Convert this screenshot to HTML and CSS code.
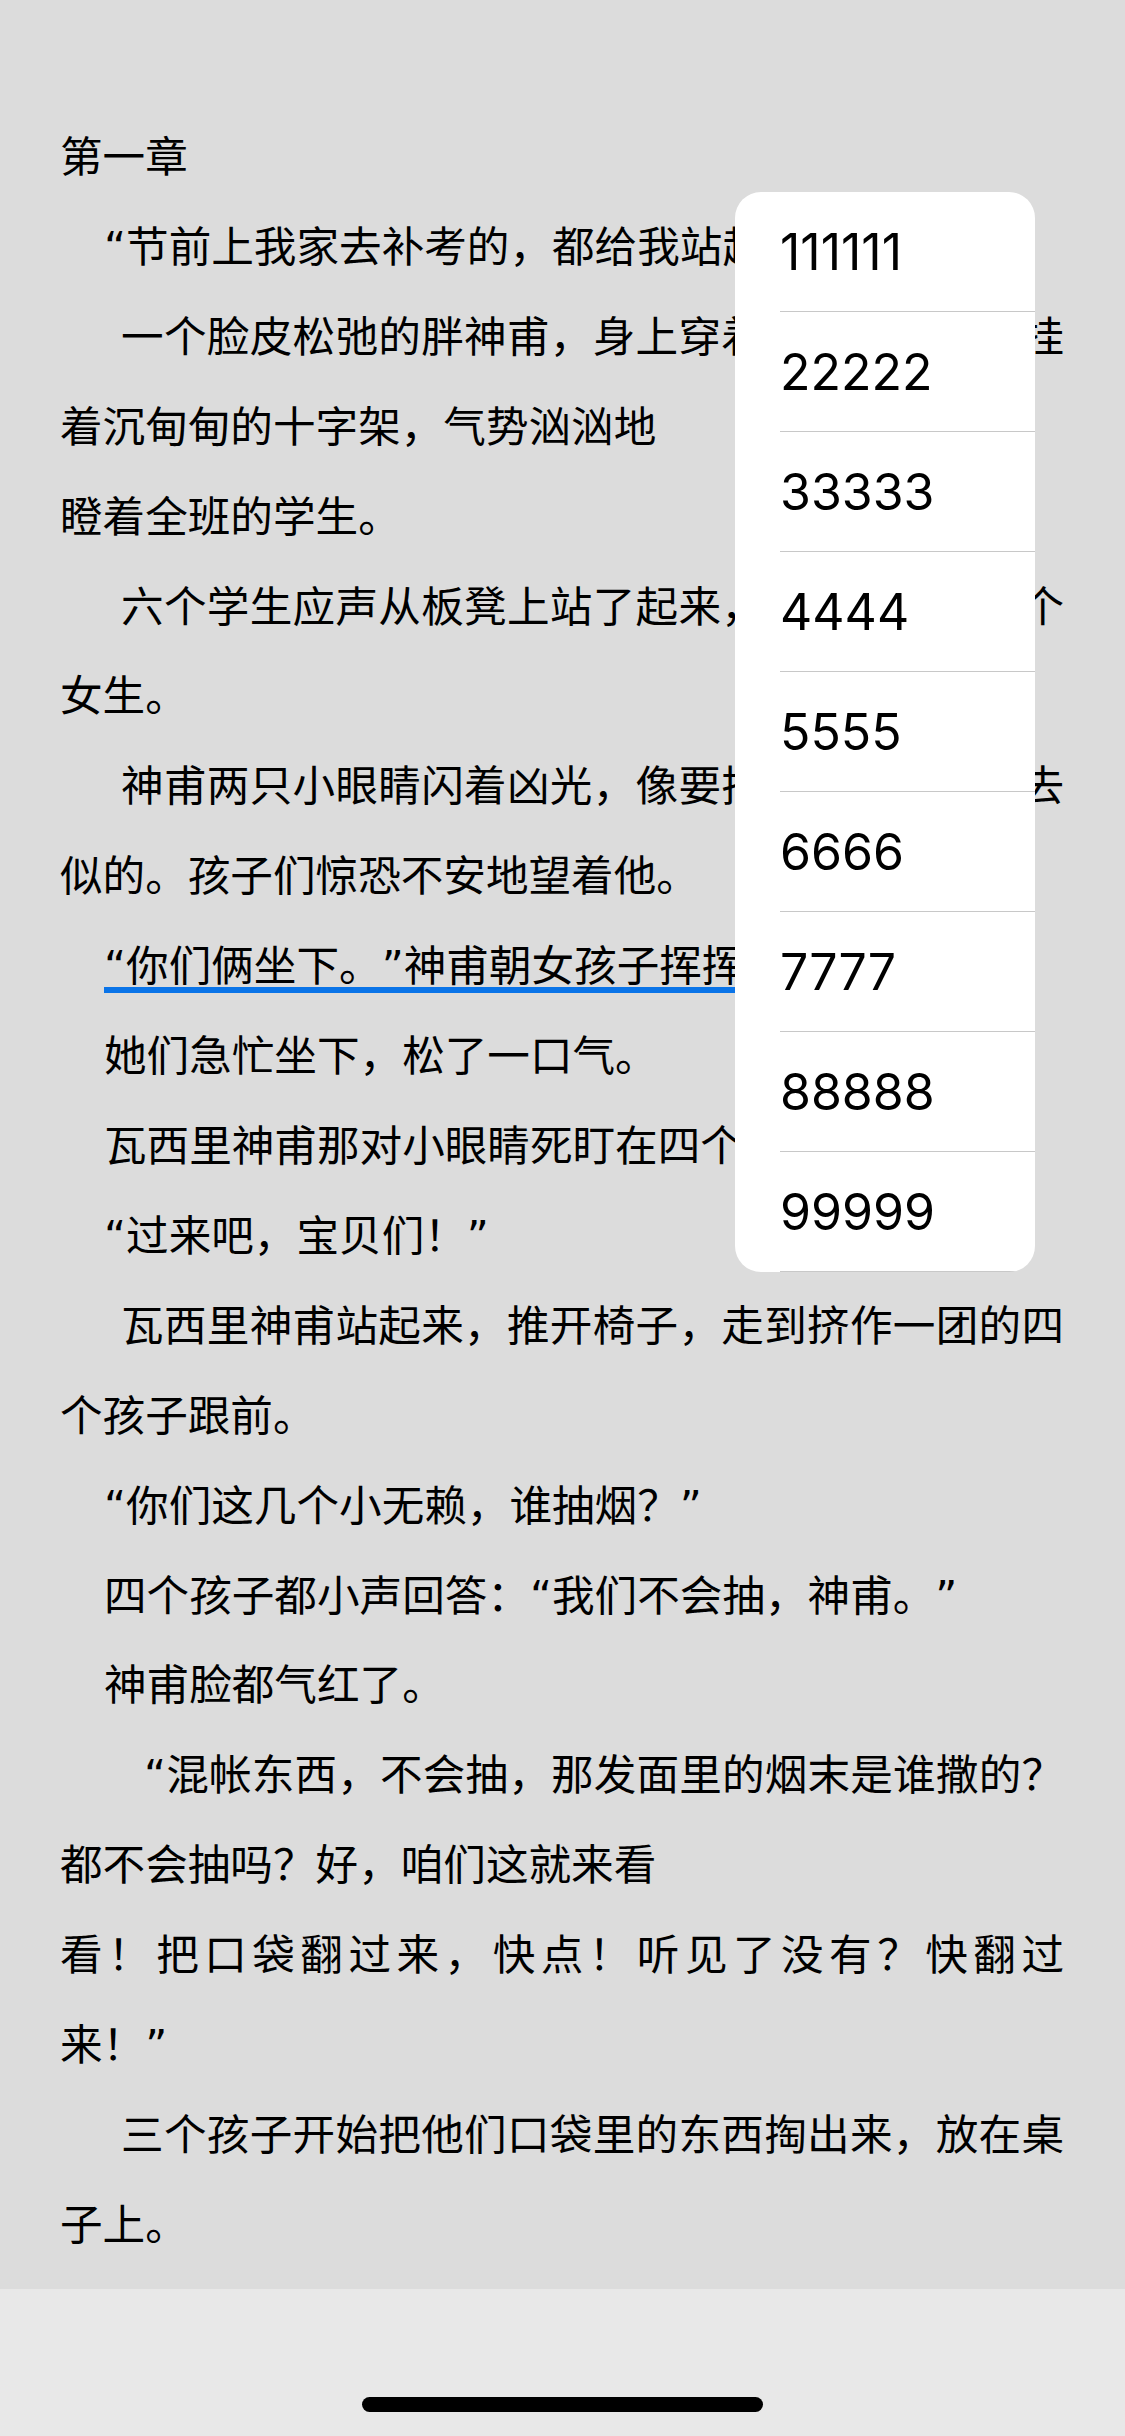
FILE: index.html
```html
<!DOCTYPE html>
<html lang="zh-CN">
<head>
<meta charset="utf-8">
<title>第一章</title>
<link rel="stylesheet" href="styles.css">
</head>
<body>
<div class="screen">
  <main class="reader">
    <h1 class="chapter">第一章</h1>
    <p class="i1">“节前上我家去补考的，都给我站起来！”</p>
    <p class="i15">一个脸皮松弛的胖神甫，身上穿着法衣，脖子上挂着沉甸甸的十字架，气势汹汹地<br>瞪着全班的学生。</p>
    <p class="i15">六个学生应声从板凳上站了起来，四个男生，两个女生。</p>
    <p class="i15">神甫两只小眼睛闪着凶光，像要把他们一口吞下去似的。孩子们惊恐不安地望着他。</p>
    <p class="i1"><span class="marked">“你们俩坐下。”神甫朝女孩子挥挥手说。</span></p>
    <p class="i1">她们急忙坐下，松了一口气。</p>
    <p class="i1">瓦西里神甫那对小眼睛死盯在四个男孩子身上。</p>
    <p class="i1">“过来吧，宝贝们！”</p>
    <p class="i15">瓦西里神甫站起来，推开椅子，走到挤作一团的四个孩子跟前。</p>
    <p class="i1">“你们这几个小无赖，谁抽烟？”</p>
    <p class="i1">四个孩子都小声回答：“我们不会抽，神甫。”</p>
    <p class="i1">神甫脸都气红了。</p>
    <p class="i2">“混帐东西，不会抽，那发面里的烟末是谁撒的？都不会抽吗？好，咱们这就来看<span class="full-line">看！把口袋翻过来，快点！听见了没有？快翻过</span>来！”</p>
    <p class="i15">三个孩子开始把他们口袋里的东西掏出来，放在桌子上。</p>
  </main>
  <div class="home-area">
    <div class="home-indicator"></div>
  </div>
  <ul class="menu">
    <li class="menu-item">111111</li>
    <li class="menu-item">22222</li>
    <li class="menu-item">33333</li>
    <li class="menu-item">4444</li>
    <li class="menu-item">5555</li>
    <li class="menu-item">6666</li>
    <li class="menu-item">7777</li>
    <li class="menu-item">88888</li>
    <li class="menu-item">99999</li>
  </ul>
</div>
</body>
</html>
```
FILE: styles.css
```css
html, body {
  margin: 0;
  padding: 0;
}

body {
  width: 1125px;
  height: 2436px;
  overflow: hidden;
  background: #e8e8e8;
  font-family: "DejaVu Sans", "Noto Sans CJK SC", sans-serif;
  color: #000;
}

.screen {
  position: relative;
  height: 2436px;
  display: flex;
  flex-direction: column;
}

.reader {
  height: 2289px;
  box-sizing: border-box;
  padding: 113px 61px 0 60px;
  background: #dcdcdc;
  font-size: 42.6px;
  line-height: 89.9px;
  text-align: justify;
  text-spacing-trim: space-all;
  overflow: hidden;
}

.chapter {
  margin: 0;
  font-size: inherit;
  font-weight: normal;
  line-height: inherit;
}

.reader p {
  margin: 0;
}

.i1 { text-indent: 44px; }
.i15 { text-indent: 61px; }
.i2 { text-indent: 84px; }

.marked {
  text-decoration: underline;
  text-decoration-color: #0a74e8;
  text-decoration-thickness: 6px;
  text-underline-offset: 6px;
  text-decoration-skip-ink: none;
}

.full-line {
  display: block;
  text-indent: 0;
  text-align: justify;
  text-align-last: justify;
}

.home-area {
  flex: 1;
  display: flex;
  justify-content: center;
  align-items: flex-end;
  padding-bottom: 24px;
}

.home-indicator {
  width: 401px;
  height: 15px;
  border-radius: 8px;
  background: #000;
}

.menu {
  position: absolute;
  left: 735px;
  top: 192px;
  width: 300px;
  margin: 0;
  padding: 0;
  list-style: none;
  background: #fff;
  border-radius: 26px;
  overflow: hidden;
  font-family: Inter, Roboto, sans-serif;
  font-variant-numeric: proportional-nums;
  font-size: 50px;
  color: #000;
}

.menu-item {
  height: 120px;
  box-sizing: border-box;
  margin-left: 45px;
  border-bottom: 1px solid #c8c8c8;
  display: flex;
  align-items: center;
}
```
